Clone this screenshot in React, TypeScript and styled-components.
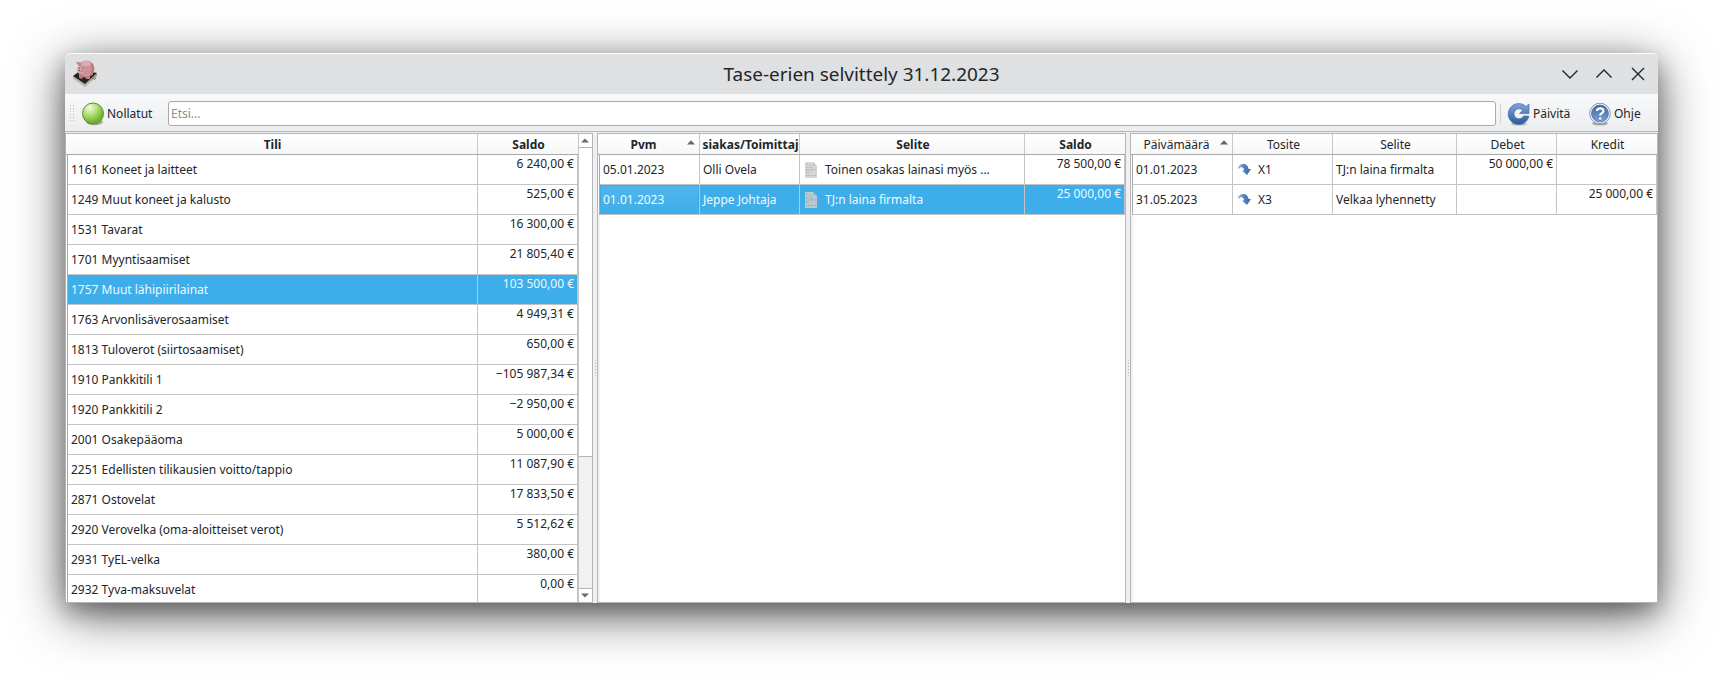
import React from "react";
import styled, { createGlobalStyle, css } from "styled-components";

const GlobalStyle = createGlobalStyle`
  * { box-sizing: border-box; }
  body { margin: 0; background: #fff; font-family: "Noto Sans", sans-serif; font-size: 12px; color: #232629; overflow: hidden; }
`;

const Desktop = styled.div`
  height: 680px;
  padding: 53px 65px 77px;
  background: #fff;
`;

const Window = styled.div`
  width: 1593px;
  height: 550px;
  display: flex;
  flex-direction: column;
  border-radius: 6px 6px 0 0;
  background: #eff0f1;
  box-shadow: 0 8px 22px rgba(0, 0, 0, 0.3), 0 12px 52px rgba(0, 0, 0, 0.6);
`;

const TitleBar = styled.header`
  height: 41px;
  flex: none;
  display: grid;
  grid-template-columns: 120px 1fr 120px;
  align-items: center;
  border-top: 1px solid #fff;
  border-radius: 6px 6px 0 0;
  background: #dee0e2;
`;

const AppIcon = styled.svg`
  width: 28px;
  height: 28px;
  margin: -2px 0 0 6px;
`;

const Title = styled.h1`
  margin: 0;
  text-align: center;
  font-size: 18.94px;
  font-weight: 400;
  line-height: 40px;
`;

const WindowButtons = styled.div`
  display: flex;
  justify-content: flex-end;
  gap: 16px;
  padding-right: 11px;
`;

const WindowGlyph = styled.svg`
  width: 18px;
  height: 18px;
  margin-top: -1px;
  fill: none;
  stroke: #232629;
  stroke-width: 1.4;
`;

const Toolbar = styled.div`
  height: 38px;
  flex: none;
  display: flex;
  align-items: center;
  padding: 2px 0 0 5px;
  border-bottom: 1px solid #b4b5b6;
  background: linear-gradient(#f8f9fb, #ecedef);
`;

const Grip = styled.div`
  width: 4px;
  height: 17px;
  margin-bottom: 1px;
  background-image: radial-gradient(circle at 0.5px 0.5px, #b6b8ba 0.7px, transparent 0.8px);
  background-size: 3px 3px;
`;

const ToolButton = styled.button<{ $left: number; $width: number; $gap?: number }>`
  width: ${(p) => p.$width}px;
  flex: none;
  display: flex;
  align-items: center;
  gap: ${(p) => p.$gap ?? 2}px;
  margin: 0 0 0 ${(p) => p.$left}px;
  padding: 0;
  border: 0;
  background: none;
  color: inherit;
  font: inherit;
  line-height: 22px;
  white-space: nowrap;
  svg { width: 24px; height: 24px; flex: none; }
`;

const SearchInput = styled.input`
  width: 1328px;
  flex: none;
  height: 25px;
  margin-left: 15px;
  padding: 0 2px 1px;
  border: 1px solid #a8a9aa;
  border-radius: 3px;
  background: #fff;
  font: inherit;
  outline: 0;
  &::placeholder { color: #8c8d8f; opacity: 1; }
`;

const Divider = styled.div`
  width: 1px;
  height: 19px;
  margin-left: 4px;
  background: #cfd1d3;
`;

const Panes = styled.main`
  flex: 1;
  min-height: 0;
  display: flex;
  padding-top: 1px;
`;

const Pane = styled.section<{ $width: number; $inset?: boolean }>`
  width: ${(p) => p.$width}px;
  flex: none;
  display: flex;
  border: 1px solid #b4b5b6;
  background: ${(p) => (p.$inset ? "linear-gradient(90deg, #f0f1f2 2px, #fff 2px)" : "#fff")};
  overflow: hidden;
`;

const Splitter = styled.div`
  width: 4px;
  flex: none;
  display: flex;
  align-items: center;
  justify-content: center;
  background: #eff0f1;
`;

const SplitGrip = styled.div`
  width: 1px;
  height: 16px;
  background: repeating-linear-gradient(#b6b8ba 0 1px, transparent 1px 3px);
`;

const Table = styled.div`
  flex: none;
`;

const gridColumns = css<{ $cols: string }>`
  display: grid;
  grid-template-columns: ${(p) => p.$cols};
`;

const HeaderRow = styled.div<{ $cols: string; $bold?: boolean }>`
  ${gridColumns}
  height: 21px;
  border-bottom: 1px solid #a8a9aa;
  background: linear-gradient(#fff, #f7f7f7);
  font-weight: ${(p) => (p.$bold ? 700 : 400)};
`;

const HeaderCell = styled.div<{ $last?: boolean }>`
  display: flex;
  align-items: center;
  justify-content: center;
  padding: 1px 0 0 2px;
  border-right: 1px solid ${(p) => (p.$last ? "transparent" : "#c8c8c8")};
  white-space: nowrap;
  line-height: 19px;
`;

const SortLabel = styled.span`
  flex: 1;
  text-align: center;
`;

const SortArrow = styled.svg`
  width: 8px;
  height: 5px;
  flex: none;
  margin: -4px 4px 0 0;
  fill: #666;
`;

const Rows = styled.div`
  padding-left: 1px;
  background: linear-gradient(90deg, #fff 1px, #a8a9aa 1px, #a8a9aa 2px, #fff 2px);
`;

const Row = styled.div<{ $cols: string; $selected?: boolean }>`
  ${gridColumns}
  height: 30px;
  border-left: 1px solid #a8a9aa;
  background: ${(p) => (p.$selected ? "#3daee9" : "#fff")};
  color: ${(p) => (p.$selected ? "#eff9ff" : "#232629")};
`;

const Cell = styled.div<{ $amount?: boolean; $current?: boolean }>`
  display: flex;
  align-items: ${(p) => (p.$amount ? "flex-start" : "center")};
  justify-content: ${(p) => (p.$amount ? "flex-end" : "flex-start")};
  padding: 0 3px;
  border-right: 1px solid #c4c4c4;
  border-bottom: 1px solid #c4c4c4;
  line-height: 17px;
  white-space: nowrap;
  overflow: hidden;
  ${(p) => p.$current && css`
    background: linear-gradient(#50b6ec, #3daee9);
    box-shadow: inset 0 0 0 1px #3fa9df;
  `}
`;

const CellIcon = styled.svg`
  width: 16px;
  height: 16px;
  flex: none;
  margin: 0 5px 0 1px;
`;

const ScrollBar = styled.div`
  width: 14px;
  display: flex;
  flex-direction: column;
  border-left: 1px solid #c4c4c4;
  background: #fff;
`;

const ScrollButton = styled.div`
  height: 13px;
  flex: none;
  display: flex;
  align-items: center;
  justify-content: center;
  padding-right: 1px;
  svg { width: 8px; height: 5px; fill: #6c6c6c; }
`;

const ScrollThumb = styled.div`
  height: 310px;
  flex: none;
  border: solid #b4b5b6;
  border-width: 1px 0;
`;

const ScrollTrack = styled.div`
  flex: 1;
  border-bottom: 1px solid #b4b5b6;
  background: #f1f1f1;
`;

const accounts: [string, string][] = [
  ["1161 Koneet ja laitteet", "6 240,00 €"],
  ["1249 Muut koneet ja kalusto", "525,00 €"],
  ["1531 Tavarat", "16 300,00 €"],
  ["1701 Myyntisaamiset", "21 805,40 €"],
  ["1757 Muut lähipiirilainat", "103 500,00 €"],
  ["1763 Arvonlisäverosaamiset", "4 949,31 €"],
  ["1813 Tuloverot (siirtosaamiset)", "650,00 €"],
  ["1910 Pankkitili 1", "−105 987,34 €"],
  ["1920 Pankkitili 2", "−2 950,00 €"],
  ["2001 Osakepääoma", "5 000,00 €"],
  ["2251 Edellisten tilikausien voitto/tappio", "11 087,90 €"],
  ["2871 Ostovelat", "17 833,50 €"],
  ["2920 Verovelka (oma-aloitteiset verot)", "5 512,62 €"],
  ["2931 TyEL-velka", "380,00 €"],
  ["2932 Tyva-maksuvelat", "0,00 €"],
];

const items = [
  { date: "05.01.2023", partner: "Olli Ovela", text: "Toinen osakas lainasi myös ...", amount: "78 500,00 €" },
  { date: "01.01.2023", partner: "Jeppe Johtaja", text: "TJ:n laina firmalta", amount: "25 000,00 €" },
];

const entries = [
  { date: "01.01.2023", doc: "X1", text: "TJ:n laina firmalta", debit: "50 000,00 €", credit: "" },
  { date: "31.05.2023", doc: "X3", text: "Velkaa lyhennetty", debit: "", credit: "25 000,00 €" },
];

const SortedHeader = ({ label }: { label: string }) => (
  <HeaderCell>
    <SortLabel>{label}</SortLabel>
    <SortArrow viewBox="0 0 8 5"><path d="M0 4.5 4 .3 8 4.5z" /></SortArrow>
  </HeaderCell>
);

const PiggyIcon = () => (
  <AppIcon viewBox="0 0 28 28">
    <path d="M2 17 14 25 26 14v3L14 28 2 19.500z" fill="#a9a58f" />
    <path d="M2 17 10 11 26 14 14 25z" fill="#24231f" />
    <path d="M2 18.500 14 26.500 19 22" fill="none" stroke="#cfcbb6" />
    <path d="M21 20l3-2M23 21l2-2" stroke="#77766c" />
    <path d="M8 13v6l3 1 1-2 3 1v1h4v-3l3-1v-4z" fill="#b97d82" />
    <ellipse cx="15.500" cy="9.500" rx="8" ry="8" fill="#cb9297" />
    <path d="M19 3a8 8 0 0 1 0 14c2-4 2-9 0-14z" fill="#a56a70" opacity=".55" />
    <path d="M5 3 11.500 3.500 8.500 8.500z" fill="#c0858a" />
    <ellipse cx="9.800" cy="11" rx="3.700" ry="4" fill="#d59ea2" />
    <ellipse cx="15" cy="4.500" rx="5" ry="2.500" fill="#e3b9bb" opacity=".7" />
    <path d="M7.500 9h1M11.500 9h1M8 11.500h1M10.500 12h1" stroke="#5e3236" />
  </AppIcon>
);

const GreenBall = () => (
  <svg viewBox="0 0 24 24">
    <defs><radialGradient id="ball" cx=".34" cy=".22" r=".85"><stop stopColor="#f2fbe6" /><stop offset=".4" stopColor="#b5e17d" /><stop offset=".8" stopColor="#72b62e" /><stop offset="1" stopColor="#69a92c" /></radialGradient></defs>
    <ellipse cx="13.500" cy="20" rx="8.500" ry="3.200" fill="#777" opacity=".6" />
    <circle cx="12" cy="11.500" r="10.500" fill="url(#ball)" stroke="#59912a" />
  </svg>
);

const RefreshIcon = () => (
  <svg viewBox="0 0 24 24">
    <defs><linearGradient id="refresh" x2="0" y2="1"><stop stopColor="#82a4d3" /><stop offset="1" stopColor="#285a9d" /></linearGradient></defs>
    <ellipse cx="12" cy="22" rx="8" ry="1.600" fill="#bbb" />
    <path d="M22 2v9.500h-9.500l3.200-3.200A5 5 0 1 0 16.500 14H22A10.500 10.500 0 1 1 19 4.500z" fill="url(#refresh)" stroke="#4a76b2" strokeWidth=".7" />
  </svg>
);

const HelpIcon = () => (
  <svg viewBox="0 0 24 24">
    <defs><linearGradient id="help" x2="0" y2="1"><stop stopColor="#41669f" /><stop offset="1" stopColor="#7ba0d3" /></linearGradient></defs>
    <ellipse cx="12" cy="21.500" rx="8" ry="2" fill="#aaa" />
    <circle cx="12" cy="11.500" r="10.300" fill="#fff" stroke="#7595c4" />
    <circle cx="12" cy="11.500" r="8.500" fill="url(#help)" stroke="#41669f" strokeWidth=".7" />
    <path d="M8.900 9c.2-3.600 6.500-3.400 6.500-.1 0 2.300-3.200 2.300-3.200 4.600" fill="none" stroke="#fff" strokeWidth="2.200" />
    <circle cx="12.200" cy="16.500" r="1.300" fill="#fff" />
  </svg>
);

const DocumentIcon = () => (
  <CellIcon viewBox="0 0 16 16" opacity=".85">
    <path d="M1 0h8l4 4v12H1z" fill="#d0d0d0" />
    <path d="M9 0v4h4z" fill="#bdbdbd" />
    <path d="M2 2.500 4 2M5 2.500l2 1M2 5.500l3-.5M6 5.500l3 .500M1.500 8h11M2 10.500h3M2 13.500h4M7 13l2 1M10 13.500h2" stroke="#adadad" fill="none" />
  </CellIcon>
);

const JumpIcon = () => (
  <CellIcon viewBox="0 0 16 16">
    <defs><linearGradient id="jump"><stop stopColor="#b9c9e2" /><stop offset=".4" stopColor="#5e85bd" /><stop offset="1" stopColor="#3a66a8" /></linearGradient></defs>
    <path d="M.8 6C2 .8 11 .3 11.500 7H14l-4 6-5-4.500h2.200C7 5 3.500 4 2 7z" fill="url(#jump)" />
  </CellIcon>
);

const accountCols = "410px 100px";
const itemCols = "100px 100px 225px 100px";
const entryCols = "100px 100px 124px 100px 100px";

export default function App() {
  return (
    <Desktop>
      <GlobalStyle />
      <Window>
        <TitleBar>
          <PiggyIcon />
          <Title>Tase-erien selvittely 31.12.2023</Title>
          <WindowButtons>
            <WindowGlyph viewBox="0 0 18 18"><path d="m1.500 5.500 7.500 7.500 7.500-7.500" /></WindowGlyph>
            <WindowGlyph viewBox="0 0 18 18"><path d="m1.500 12.500 7.500-7.500 7.500 7.500" /></WindowGlyph>
            <WindowGlyph viewBox="0 0 18 18"><path d="m3 3 12 12M15 3 3 15" /></WindowGlyph>
          </WindowButtons>
        </TitleBar>
        <Toolbar>
          <Grip />
          <ToolButton $left={7} $width={72}><GreenBall />Nollatut</ToolButton>
          <SearchInput placeholder="Etsi..." />
          <Divider />
          <ToolButton $left={6} $width={64}><RefreshIcon />Päivitä</ToolButton>
          <ToolButton $left={17} $width={54}><HelpIcon />Ohje</ToolButton>
        </Toolbar>
        <Panes>
          <Pane $width={528}>
            <Table>
              <HeaderRow $cols="412px 100px" $bold>
                <HeaderCell>Tili</HeaderCell>
                <HeaderCell $last>Saldo</HeaderCell>
              </HeaderRow>
              <Rows>
                {accounts.map(([name, amount], i) => (
                  <Row key={name} $cols={accountCols} $selected={i === 4}>
                    <Cell>{name}</Cell>
                    <Cell $amount>{amount}</Cell>
                  </Row>
                ))}
              </Rows>
            </Table>
            <ScrollBar>
              <ScrollButton><svg viewBox="0 0 8 5"><path d="M0 4.500 4 .5l4 4z" /></svg></ScrollButton>
              <ScrollThumb />
              <ScrollTrack />
              <ScrollButton><svg viewBox="0 0 8 5"><path d="M0 .5 4 4.500l4-4z" /></svg></ScrollButton>
            </ScrollBar>
          </Pane>
          <Splitter><SplitGrip /></Splitter>
          <Pane $width={529} $inset>
            <Table>
              <HeaderRow $cols="102px 100px 225px 100px" $bold>
                <SortedHeader label="Pvm" />
                <HeaderCell>siakas/Toimittaj</HeaderCell>
                <HeaderCell>Selite</HeaderCell>
                <HeaderCell $last>Saldo</HeaderCell>
              </HeaderRow>
              <Rows>
                {items.map((item, i) => (
                  <Row key={item.date} $cols={itemCols} $selected={i === 1}>
                    <Cell $current={i === 1}>{item.date}</Cell>
                    <Cell>{item.partner}</Cell>
                    <Cell><DocumentIcon />{item.text}</Cell>
                    <Cell $amount>{item.amount}</Cell>
                  </Row>
                ))}
              </Rows>
            </Table>
          </Pane>
          <Splitter><SplitGrip /></Splitter>
          <Pane $width={528} $inset>
            <Table>
              <HeaderRow $cols="102px 100px 124px 100px 100px">
                <SortedHeader label="Päivämäärä" />
                <HeaderCell>Tosite</HeaderCell>
                <HeaderCell>Selite</HeaderCell>
                <HeaderCell>Debet</HeaderCell>
                <HeaderCell $last>Kredit</HeaderCell>
              </HeaderRow>
              <Rows>
                {entries.map((entry) => (
                  <Row key={entry.doc} $cols={entryCols}>
                    <Cell>{entry.date}</Cell>
                    <Cell><JumpIcon />{entry.doc}</Cell>
                    <Cell>{entry.text}</Cell>
                    <Cell $amount>{entry.debit}</Cell>
                    <Cell $amount>{entry.credit}</Cell>
                  </Row>
                ))}
              </Rows>
            </Table>
          </Pane>
        </Panes>
      </Window>
    </Desktop>
  );
}
